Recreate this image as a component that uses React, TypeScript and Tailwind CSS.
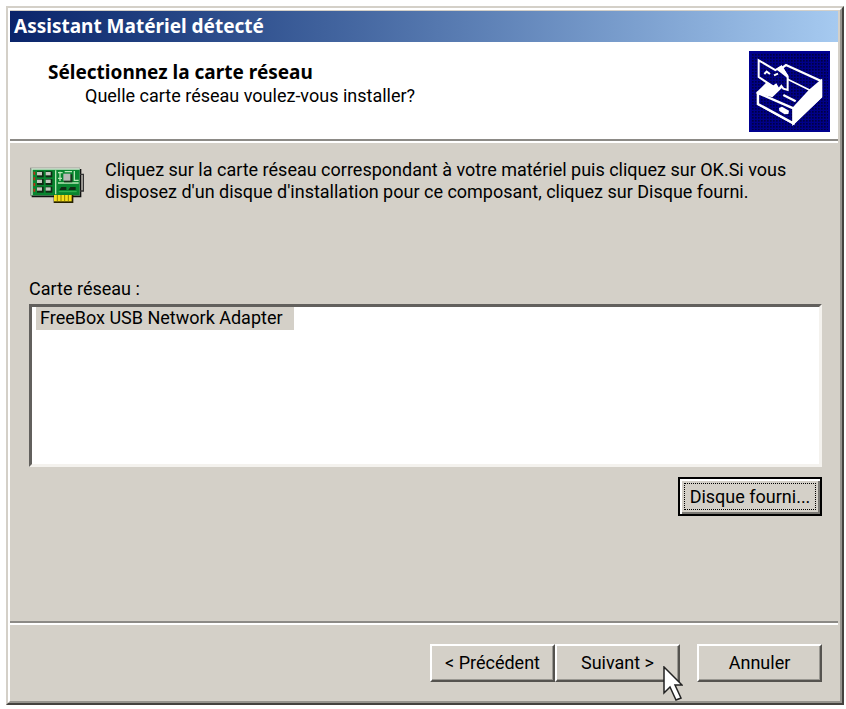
import type { ButtonHTMLAttributes } from "react";

const raised =
  "h-[38px] border-2 border-t-white border-l-white border-r-[#55534f] border-b-[#55534f] bg-[#d4d0c8] shadow-[inset_-1px_-1px_0_#9a9892] text-center";

function DialogButton({ className = "", ...props }: ButtonHTMLAttributes<HTMLButtonElement>) {
  return <button type="button" className={`${raised} ${className}`} {...props} />;
}

function Separator() {
  return <div className="h-1 shrink-0 border-t-2 border-b-2 border-t-[#8c8a86] border-b-white" />;
}

function HardwareIcon() {
  return (
    <svg viewBox="27 153 243 243" className="size-[81px] shrink-0" aria-hidden="true">
      <defs>
        <pattern id="dither" x="27" y="153" width="9" height="9" patternUnits="userSpaceOnUse">
          <rect width="9" height="9" fill="#000088" />
          <rect width="5" height="5" fill="#000044" />
        </pattern>
      </defs>
      <rect x="27" y="153" width="243" height="243" fill="#000090" />
      <rect x="33" y="159" width="231" height="231" fill="url(#dither)" />
      <g stroke="#fff" strokeWidth="7" strokeLinejoin="miter" fill="none">
        <path d="M120 208 L138 195 L243 243 V290 L160 370 L54 312 V278 L84 248" />
        <path d="M143 238 L210 271" strokeWidth="5" />
        <path d="M210 271 L243 243 V290 L160 370 V325 Z" fill="#fff" />
        <path d="M54 278 L84 249 L123 262 L96 288 Z" fill="#fff" />
        <path d="M54 279 L160 325 V370 L54 312 Z" fill="url(#dither)" />
        <path
          d="M56 181 L106 210 L124 200 L143 229 V270 L130 266 L124 258 L116 268 L108 254 L100 260 L56 231 Z"
          fill="url(#dither)"
          strokeWidth="6"
        />
        <path d="M130 285 L167 304" strokeWidth="7" />
        <path d="M73 222 L80 215 L90 222 M102 226 L114 221" strokeWidth="6" />
      </g>
      <path d="M108 208 L125 196 L143 225 L143 235 L124 220 Z" fill="#fff" />
      <path d="M117 324 L126 320 L147 332 L145 342 L134 343 L118 333 Z" fill="#fff" />
    </svg>
  );
}

function NetworkCardIcon() {
  return (
    <svg viewBox="25 50 165 111" className="h-[37px] w-[55px] shrink-0" aria-hidden="true">
      <path d="M33 56 H182 V141 H33 Z" fill="#111" />
      <path d="M178 72 H188 V122 H176" fill="none" stroke="#333" strokeWidth="4" />
      <rect x="28" y="52" width="150" height="84" fill="#8a8d88" />
      <rect x="32" y="56" width="145" height="79" fill="#08852f" />
      <path d="M32 56 H177 M34 56 V134" stroke="#d5ead5" strokeWidth="4" fill="none" />
      <path d="M41 64 V130" stroke="#c52b16" strokeWidth="5" strokeDasharray="9 8" />
      {[63, 86, 109].map((y) => (
        <g key={y}>
          <rect x="49" y={y} width="20" height="18" fill="#102914" />
          <rect x="49" y={y + 2} width="15" height="10" fill="#c2c9bd" />
          <rect x="75" y={y} width="20" height="18" fill="#102914" />
          <rect x="75" y={y + 2} width="15" height="10" fill="#c2c9bd" />
        </g>
      ))}
      <path
        d="M105 60 V132 M112 67 H126 M118 64 V92 M112 98 H174 M161 62 V90 H174 M132 64 H154 M112 84 H124"
        stroke="#b6e6b5"
        strokeWidth="4"
        fill="none"
      />
      <rect x="130" y="72" width="25" height="24" fill="#17351b" />
      <rect x="128" y="70" width="21" height="21" fill="#b7bab5" />
      <path d="M116 119 L122 110 H137 V119 Z M143 119 L149 110 H165 V119 Z" fill="#102914" />
      <path d="M114 124 H168" stroke="#37b955" strokeWidth="3" />
      <rect x="99" y="134" width="59" height="24" fill="#252000" />
      <rect x="100" y="134" width="53" height="19" fill="#f5df1b" />
      <path d="M110 134 V153 M121 134 V153 M132 134 V153 M143 134 V153" stroke="#8d7d00" strokeWidth="3" />
    </svg>
  );
}

function Cursor() {
  return (
    <svg viewBox="0 0 20 36" className="pointer-events-none absolute top-[22px] right-[-3px] h-[36px] w-[20px]" aria-hidden="true">
      <path d="M1 1 V27 L7 21 L13 34 L18 32 L12 19 H19 Z" fill="#fff" stroke="#222" strokeWidth="1.5" />
    </svg>
  );
}

export default function App() {
  return (
    <main className="flex min-h-screen flex-col bg-white pt-[6px] pr-[2px] pb-[4px] pl-[6px] font-[Roboto,'Liberation_Sans',sans-serif] text-[18px] leading-[22px] text-black">
      <section className="flex grow flex-col border-2 border-t-[#d4d0c8] border-r-[#45433f] border-b-[#45433f] border-l-[#d4d0c8]">
        <div className="flex grow flex-col border-2 border-t-white border-r-[#96948e] border-b-[#96948e] border-l-white bg-[#d4d0c8] pr-[2px]">
          <h1 className="mt-px h-[31px] bg-linear-to-r from-[#0a246a] to-[#a6caf0] pl-1 font-['Noto_Sans','Liberation_Sans',sans-serif] text-[19px] leading-[30px] font-bold text-white">
            Assistant Matériel détecté
          </h1>
          <header className="flex h-[97px] items-start justify-between bg-white pt-[9px] pr-2 pl-[38px]">
            <div className="pt-2">
              <h2 className="font-['Noto_Sans','Liberation_Sans',sans-serif] text-[19px] leading-[26px] font-bold">
                Sélectionnez la carte réseau
              </h2>
              <p className="pl-[37px]">Quelle carte réseau voulez-vous installer?</p>
            </div>
            <HardwareIcon />
          </header>
          <Separator />

          <div className="flex grow flex-col pt-[16px] pr-[16px] pl-[19px]">
            <div className="flex items-start gap-[21px]">
              <div className="pt-2">
                <NetworkCardIcon />
              </div>
              <p className="max-w-[690px]">
                Cliquez sur la carte réseau correspondant à votre matériel puis cliquez sur OK.Si vous disposez d'un disque
                d'installation pour ce composant, cliquez sur Disque fourni.
              </p>
            </div>
            <label htmlFor="adapters" className="mt-[74px] mb-1">
              Carte réseau :
            </label>
            <select
              id="adapters"
              size={6}
              className="h-[163px] w-full appearance-none overflow-hidden border-[3px] border-t-[#62605d] border-r-[#f4f2ee] border-b-[#f4f2ee] border-l-[#62605d] bg-white p-0 pl-1 outline-none"
            >
              <option className="h-[23px] min-h-0 w-[258px] bg-[#d4d0c8] p-0 pl-1">FreeBox USB Network Adapter</option>
            </select>
            <button
              type="button"
              className="mt-[10px] h-[39px] w-[144px] self-end border-2 border-black bg-[#d4d0c8] p-[4px] shadow-[inset_2px_2px_0_#fff,inset_-2px_-2px_0_#7b7974]"
            >
              <span className="flex h-full items-center justify-center border border-dotted border-black whitespace-nowrap">
                Disque fourni...
              </span>
            </button>
          </div>

          <Separator />
          <footer className="flex h-[76px] items-start justify-end gap-[17px] pt-[19px] pr-[16px]">
            <div className="relative flex">
              <DialogButton className="w-[125px]">&lt; Précédent</DialogButton>
              <DialogButton className="w-[125px]">Suivant &gt;</DialogButton>
              <Cursor />
            </div>
            <DialogButton className="w-[125px]">Annuler</DialogButton>
          </footer>
        </div>
      </section>
    </main>
  );
}
